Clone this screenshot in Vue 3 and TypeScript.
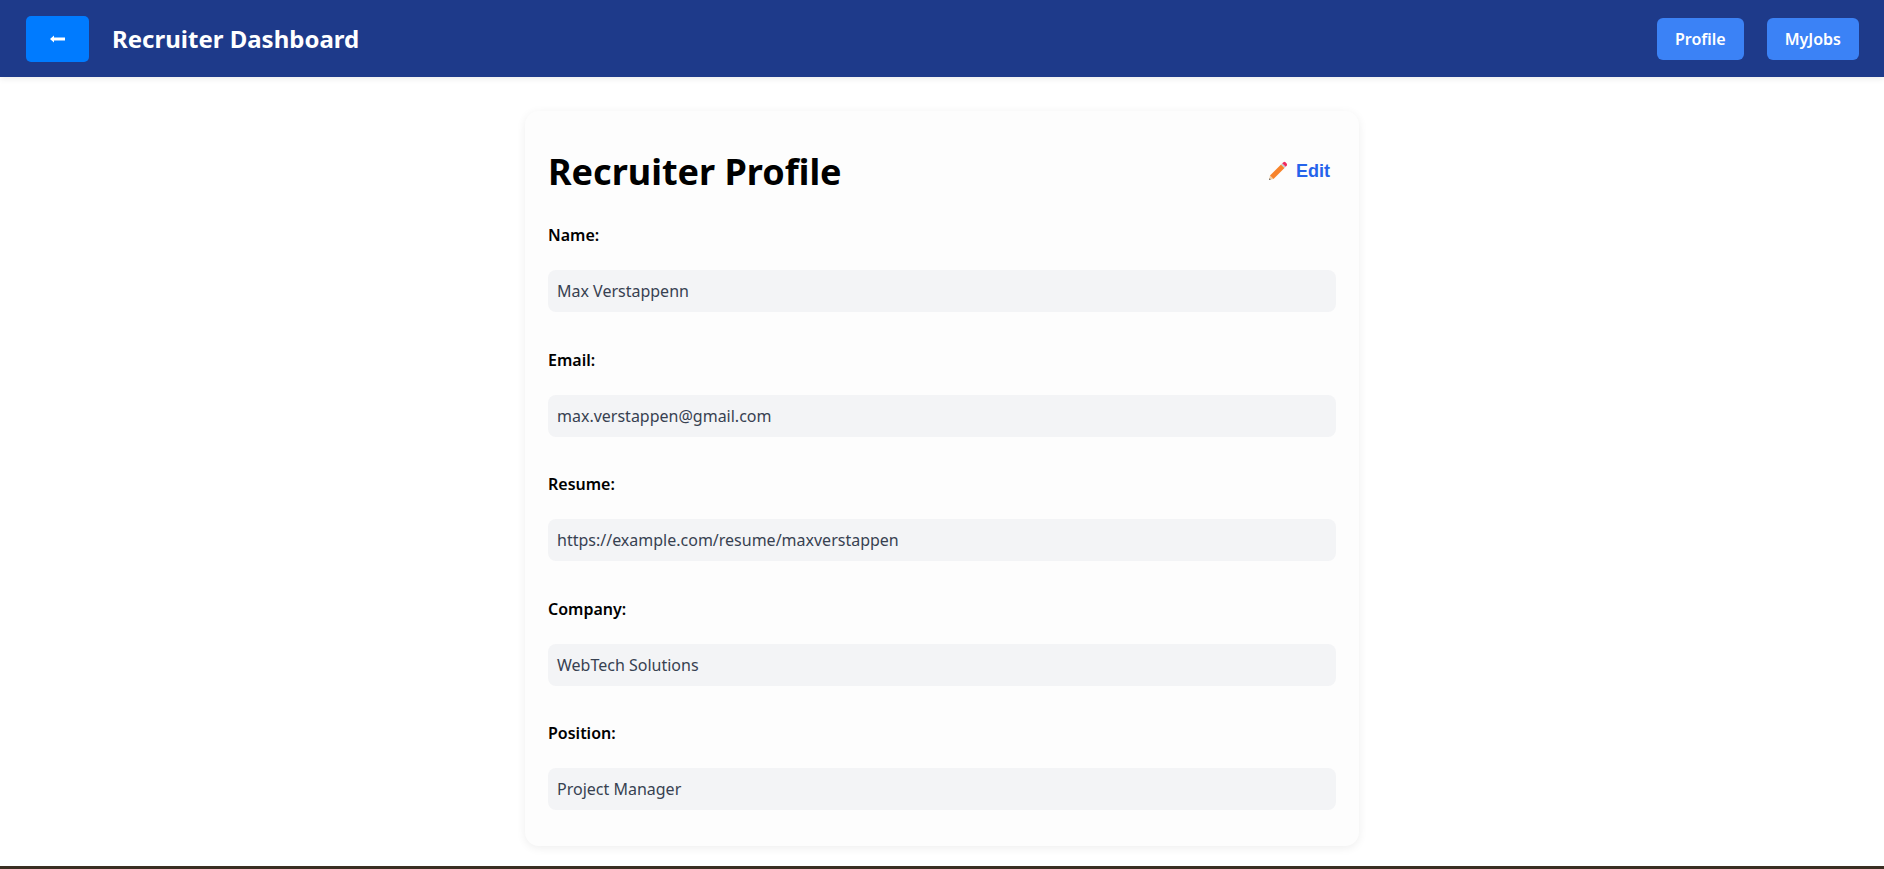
<script setup lang="ts">
const fields = [
  { label: 'Name:', value: 'Max Verstappenn' },
  { label: 'Email:', value: 'max.verstappen@gmail.com' },
  { label: 'Resume:', value: 'https://example.com/resume/maxverstappen' },
  { label: 'Company:', value: 'WebTech Solutions' },
  { label: 'Position:', value: 'Project Manager' },
]
</script>

<template>
  <div class="page">
    <header class="topbar">
      <div class="left">
        <button class="back">
          <svg width="15" height="8" viewBox="0 0 15 8">
            <path d="M0 4 L4 .5 V2.5 H15 V5.5 H4 V7.5 Z" fill="#fff" />
          </svg>
        </button>
        <h1>Recruiter Dashboard</h1>
      </div>
      <nav>
        <button class="nav-btn">Profile</button>
        <button class="nav-btn">MyJobs</button>
      </nav>
    </header>

    <main>
      <section class="card">
        <div class="card-head">
          <h2>Recruiter Profile</h2>
          <button class="edit">
            <svg width="20" height="20" viewBox="0 0 20 20">
              <path d="M1 19 L2 14.5 L5.5 18 Z" fill="#f5cf9f" />
              <path d="M1 19 L1.4 17.2 L2.8 18.6 Z" fill="#5a5a5a" />
              <path d="M2 14.5 L13 3.5 L16.5 7 L5.5 18 Z" fill="#f7832b" />
              <path d="M13 3.5 L14.2 2.3 L17.7 5.8 L16.5 7 Z" fill="#c9c9c9" />
              <path d="M14.2 2.3 L15.5 1.2 Q16.5 .5 17.5 1.3 L18.6 2.4 Q19.4 3.4 18.8 4.4 L17.7 5.8 Z" fill="#f0285f" />
            </svg>
            <span>Edit</span>
          </button>
        </div>
        <div v-for="f in fields" :key="f.label" class="field">
          <label>{{ f.label }}</label>
          <div class="value">{{ f.value }}</div>
        </div>
      </section>
    </main>
    <div class="strip"></div>
  </div>
</template>

<style>
html, body {
  margin: 0;
  height: 100%;
  overflow: hidden;
  background: #fff;
}
</style>

<style scoped>
.page {
  height: 869px;
  overflow: hidden;
  font-family: "Noto Sans", "Open Sans", sans-serif;
}
.topbar {
  height: 77px;
  box-sizing: border-box;
  background: #1e3a8a;
  box-shadow: 0 2px 6px rgba(0, 0, 0, 0.08);
  padding: 0 25px 0 26px;
  display: flex;
  align-items: center;
  justify-content: space-between;
}
.left {
  display: flex;
  align-items: center;
  gap: 23px;
}
.back {
  width: 63px;
  height: 46px;
  border: none;
  border-radius: 5px;
  background: #007bff;
  display: flex;
  align-items: center;
  justify-content: center;
  padding: 0;
}
h1 {
  margin: 0;
  font-size: 24px;
  font-weight: 700;
  color: #fff;
}
nav {
  display: flex;
  gap: 23px;
}
.nav-btn {
  height: 42px;
  padding: 0 18px;
  border: none;
  border-radius: 6px;
  background: #3b82f6;
  color: #fff;
  font-family: inherit;
  font-size: 16px;
  font-weight: 600;
}
main {
  display: flex;
  justify-content: center;
  padding-top: 34px;
}
.card {
  width: 834px;
  box-sizing: border-box;
  padding: 0 23px;
  background: #fdfdfd;
  border-radius: 14px;
  box-shadow: 0 2px 10px rgba(0, 0, 0, 0.07);
}
.card-head {
  display: flex;
  align-items: center;
  justify-content: space-between;
  height: 96px;
  margin-bottom: 16px;
  padding-top: 24px;
  box-sizing: content-box;
  height: 72px;
}
h2 {
  margin: 0;
  font-size: 36px;
  font-weight: 700;
  color: #000;
}
.edit {
  display: flex;
  align-items: center;
  gap: 8px;
  border: none;
  background: none;
  padding: 0 6px 0 0;
  color: #2563eb;
  font-family: "Liberation Sans", Arial, sans-serif;
  font-size: 18px;
  font-weight: 700;
}
.field {
  margin-bottom: 35.5px;
}
label {
  display: block;
  height: 24px;
  line-height: 24px;
  margin-bottom: 23px;
  font-size: 16px;
  font-weight: 600;
  color: #000;
}
.value {
  height: 42px;
  line-height: 42px;
  padding: 0 9px;
  border-radius: 8px;
  background: #f3f4f6;
  color: #374151;
  font-size: 16px;
}
.strip {
  position: fixed;
  left: 0;
  right: 0;
  bottom: 0;
  height: 3px;
  background: #3a2e22;
}
</style>
